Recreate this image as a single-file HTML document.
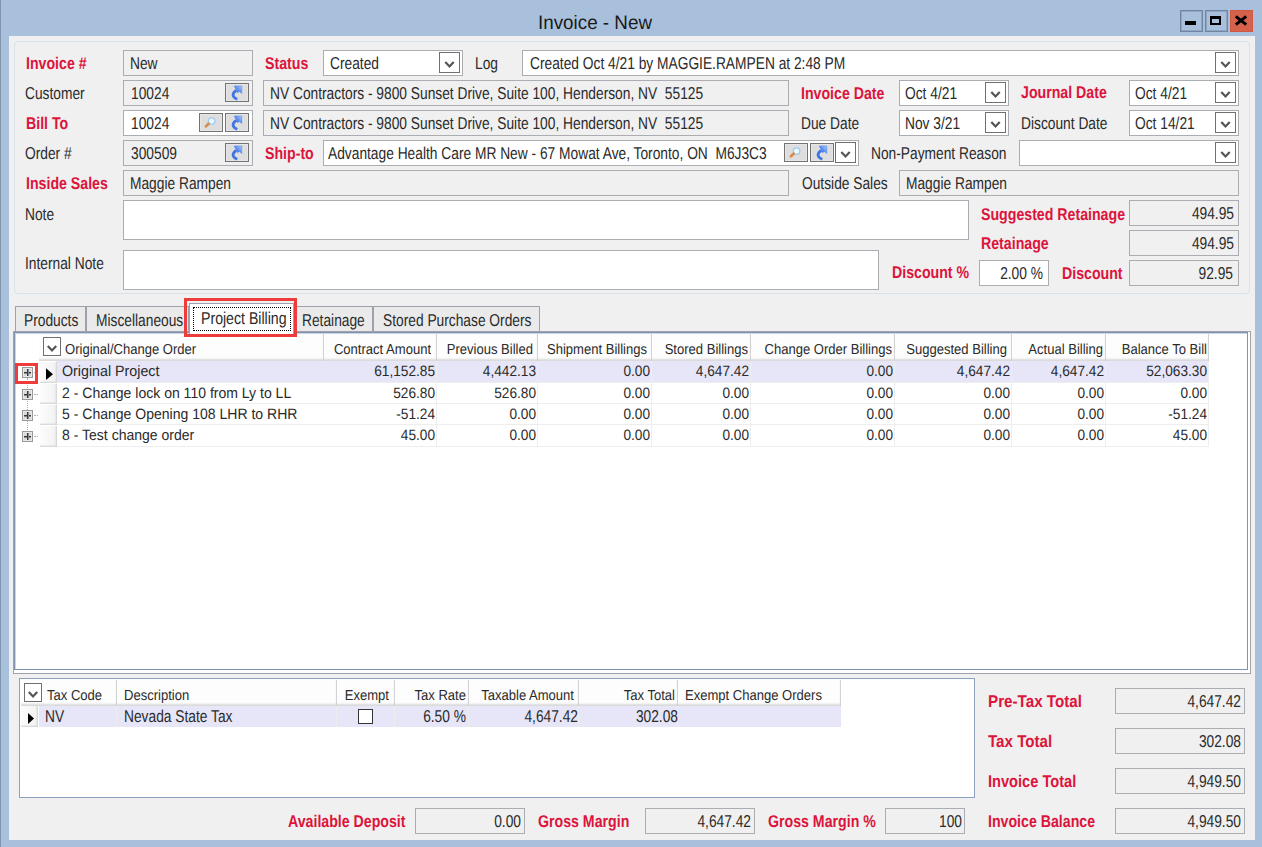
<!DOCTYPE html>
<html><head><meta charset="utf-8"><style>
html,body{margin:0;padding:0;}
body{width:1262px;height:847px;overflow:hidden;position:relative;background:#A8C0DC;font-family:"Liberation Sans", sans-serif;}
body div, body svg{position:absolute;}
body div{text-rendering:geometricPrecision;white-space:pre;}
.t{font-size:17.2px;color:#2a2a2a;}
.b{font-size:17px;font-weight:bold;color:#DC143C;}
.g{font-size:15px;color:#2a2a2a;}
.h{font-size:14.5px;color:#2a2a2a;}
.title{font-size:19.5px;color:#1a1a1a;}
</style></head><body>
<div style="left:0;top:0;width:1px;height:847px;background:#8196AE"></div>
<div class="title" style="left:538px;top:10.0px;height:26px;line-height:26px;transform:scaleX(0.965);transform-origin:0 0;">Invoice - New</div>
<div style="left:1180px;top:10px;width:23px;height:22px;border:1px solid #6F86A3;box-shadow:inset 0 0 0 1px #8FA5C0;box-sizing:border-box;"></div>
<div style="left:1205px;top:10px;width:23px;height:22px;border:1px solid #6F86A3;box-shadow:inset 0 0 0 1px #8FA5C0;box-sizing:border-box;"></div>
<div style="left:1230px;top:10px;width:23px;height:22px;background:#D6624B;box-shadow:inset 0 0 0 1px #CF5A44;"></div>
<div style="left:1185px;top:21px;width:11px;height:4px;background:#000"></div>
<div style="left:1210px;top:16px;width:11px;height:9px;border:2.5px solid #000;border-top-width:3px;box-sizing:border-box"></div>
<svg style="position:absolute;left:1230px;top:10px" width="23" height="22"><path d="M5.8 6.3 L16.2 14.7 M16.2 6.3 L5.8 14.7" stroke="#000" stroke-width="3"/></svg>
<div style="left:9px;top:36px;width:1246px;height:804px;background:#F0F0F0;"></div>
<div style="left:14px;top:41px;width:1236px;height:253px;border:1px solid #D8E2EA;border-radius:4px;box-sizing:border-box;"></div>
<div class="b" style="left:26px;top:50.5px;height:26px;line-height:26px;transform:scaleX(0.833);transform-origin:0 0;">Invoice #</div>
<div style="left:123px;top:50px;width:130px;height:26px;background:#F0F0F0;border:1px solid #ABADB3;box-sizing:border-box;"></div>
<div class="t" style="left:130px;top:49.5px;height:26px;line-height:26px;transform:scaleX(0.801);transform-origin:0 0;">New</div>
<div class="b" style="left:265px;top:50.5px;height:26px;line-height:26px;transform:scaleX(0.833);transform-origin:0 0;">Status</div>
<div style="left:323px;top:50px;width:140px;height:26px;background:#fff;border:1px solid #ABADB3;box-sizing:border-box;"></div>
<div style="left:439px;top:52px;width:21px;height:21px;background:#fff;border:1px solid #707070;box-sizing:border-box;"></div>
<svg style="position:absolute;left:439px;top:52px" width="21" height="21"><path d="M6.3 10.0 L10.5 14.5 L14.7 10.0" stroke="#555" stroke-width="2.2" fill="none"/></svg>
<div class="t" style="left:330px;top:49.5px;height:26px;line-height:26px;transform:scaleX(0.801);transform-origin:0 0;">Created</div>
<div class="t" style="left:475px;top:49.5px;height:26px;line-height:26px;transform:scaleX(0.801);transform-origin:0 0;">Log</div>
<div style="left:522px;top:50px;width:717px;height:26px;background:#fff;border:1px solid #ABADB3;box-sizing:border-box;"></div>
<div style="left:1215px;top:52px;width:21px;height:21px;background:#fff;border:1px solid #707070;box-sizing:border-box;"></div>
<svg style="position:absolute;left:1215px;top:52px" width="21" height="21"><path d="M6.3 10.0 L10.5 14.5 L14.7 10.0" stroke="#555" stroke-width="2.2" fill="none"/></svg>
<div class="t" style="left:530px;top:49.5px;height:26px;line-height:26px;transform:scaleX(0.801);transform-origin:0 0;">Created Oct 4/21 by MAGGIE.RAMPEN at 2:48 PM</div>
<div class="t" style="left:25px;top:79.5px;height:26px;line-height:26px;transform:scaleX(0.801);transform-origin:0 0;">Customer</div>
<div style="left:123px;top:80px;width:130px;height:26px;background:#F0F0F0;border:1px solid #ABADB3;box-sizing:border-box;"></div>
<div class="t" style="left:131px;top:79.5px;height:26px;line-height:26px;transform:scaleX(0.801);transform-origin:0 0;">10024</div>
<div style="left:225px;top:83px;width:24px;height:19px;background:#DEDEDE;border:1px solid #737373;box-shadow:inset 0 0 0 1px #E6E6E6;box-sizing:border-box;"></div>
<div style="left:225px;top:83px;width:24px;height:19px;"><svg width="24" height="19" style="position:absolute;left:0;top:0"><defs><linearGradient id="lg" x1="0" y1="1" x2="1" y2="0"><stop offset="0" stop-color="#2a62dc"/><stop offset="0.5" stop-color="#5a8ef0"/><stop offset="1" stop-color="#b4cffc"/></linearGradient></defs><path d="M12.3 16.2 C8.6 14.8 6.8 12.2 9.2 9.2 L11.2 7.2" stroke="#3f74e4" stroke-width="2.8" fill="none"/><path d="M9.2 3 L16.7 3 L16.7 10.4 L14.6 8.6 L12.4 9.6 L11 6.2 Z" fill="url(#lg)" stroke="#4f84ea" stroke-width="0.6"/></svg></div>
<div style="left:263px;top:80px;width:526px;height:26px;background:#F0F0F0;border:1px solid #ABADB3;box-sizing:border-box;"></div>
<div class="t" style="left:270px;top:79.5px;height:26px;line-height:26px;transform:scaleX(0.801);transform-origin:0 0;">NV Contractors - 9800 Sunset Drive, Suite 100, Henderson, NV&nbsp; 55125</div>
<div class="b" style="left:801px;top:80.5px;height:26px;line-height:26px;transform:scaleX(0.833);transform-origin:0 0;">Invoice Date</div>
<div style="left:899px;top:80px;width:110px;height:26px;background:#fff;border:1px solid #ABADB3;box-sizing:border-box;"></div>
<div style="left:985px;top:82px;width:21px;height:21px;background:#fff;border:1px solid #707070;box-sizing:border-box;"></div>
<svg style="position:absolute;left:985px;top:82px" width="21" height="21"><path d="M6.3 10.0 L10.5 14.5 L14.7 10.0" stroke="#555" stroke-width="2.2" fill="none"/></svg>
<div class="t" style="left:905px;top:79.5px;height:26px;line-height:26px;transform:scaleX(0.801);transform-origin:0 0;">Oct 4/21</div>
<div class="b" style="left:1021px;top:79.5px;height:26px;line-height:26px;transform:scaleX(0.833);transform-origin:0 0;">Journal Date</div>
<div style="left:1129px;top:80px;width:110px;height:26px;background:#fff;border:1px solid #ABADB3;box-sizing:border-box;"></div>
<div style="left:1215px;top:82px;width:21px;height:21px;background:#fff;border:1px solid #707070;box-sizing:border-box;"></div>
<svg style="position:absolute;left:1215px;top:82px" width="21" height="21"><path d="M6.3 10.0 L10.5 14.5 L14.7 10.0" stroke="#555" stroke-width="2.2" fill="none"/></svg>
<div class="t" style="left:1135px;top:79.5px;height:26px;line-height:26px;transform:scaleX(0.801);transform-origin:0 0;">Oct 4/21</div>
<div class="b" style="left:26px;top:110.5px;height:26px;line-height:26px;transform:scaleX(0.833);transform-origin:0 0;">Bill To</div>
<div style="left:123px;top:110px;width:130px;height:26px;background:#fff;border:1px solid #ABADB3;box-sizing:border-box;"></div>
<div class="t" style="left:131px;top:109.5px;height:26px;line-height:26px;transform:scaleX(0.801);transform-origin:0 0;">10024</div>
<div style="left:199px;top:113px;width:24px;height:19px;background:#DEDEDE;border:1px solid #737373;box-shadow:inset 0 0 0 1px #E6E6E6;box-sizing:border-box;"></div>
<div style="left:199px;top:113px;width:24px;height:19px;"><svg width="24" height="19" style="position:absolute;left:0;top:0"><circle cx="12.6" cy="8.1" r="3.3" fill="#e2fbff" stroke="#a6c6ee" stroke-width="1.3"/><path d="M7 13.2 L9.6 10.8" stroke="#d98b4a" stroke-width="2.8" stroke-linecap="round"/></svg></div>
<div style="left:225px;top:113px;width:24px;height:19px;background:#DEDEDE;border:1px solid #737373;box-shadow:inset 0 0 0 1px #E6E6E6;box-sizing:border-box;"></div>
<div style="left:225px;top:113px;width:24px;height:19px;"><svg width="24" height="19" style="position:absolute;left:0;top:0"><defs><linearGradient id="lg" x1="0" y1="1" x2="1" y2="0"><stop offset="0" stop-color="#2a62dc"/><stop offset="0.5" stop-color="#5a8ef0"/><stop offset="1" stop-color="#b4cffc"/></linearGradient></defs><path d="M12.3 16.2 C8.6 14.8 6.8 12.2 9.2 9.2 L11.2 7.2" stroke="#3f74e4" stroke-width="2.8" fill="none"/><path d="M9.2 3 L16.7 3 L16.7 10.4 L14.6 8.6 L12.4 9.6 L11 6.2 Z" fill="url(#lg)" stroke="#4f84ea" stroke-width="0.6"/></svg></div>
<div style="left:263px;top:110px;width:526px;height:26px;background:#F0F0F0;border:1px solid #ABADB3;box-sizing:border-box;"></div>
<div class="t" style="left:270px;top:109.5px;height:26px;line-height:26px;transform:scaleX(0.801);transform-origin:0 0;">NV Contractors - 9800 Sunset Drive, Suite 100, Henderson, NV&nbsp; 55125</div>
<div class="t" style="left:801px;top:109.5px;height:26px;line-height:26px;transform:scaleX(0.801);transform-origin:0 0;">Due Date</div>
<div style="left:899px;top:110px;width:110px;height:26px;background:#fff;border:1px solid #ABADB3;box-sizing:border-box;"></div>
<div style="left:985px;top:112px;width:21px;height:21px;background:#fff;border:1px solid #707070;box-sizing:border-box;"></div>
<svg style="position:absolute;left:985px;top:112px" width="21" height="21"><path d="M6.3 10.0 L10.5 14.5 L14.7 10.0" stroke="#555" stroke-width="2.2" fill="none"/></svg>
<div class="t" style="left:905px;top:109.5px;height:26px;line-height:26px;transform:scaleX(0.801);transform-origin:0 0;">Nov 3/21</div>
<div class="t" style="left:1021px;top:109.5px;height:26px;line-height:26px;transform:scaleX(0.801);transform-origin:0 0;">Discount Date</div>
<div style="left:1129px;top:110px;width:110px;height:26px;background:#fff;border:1px solid #ABADB3;box-sizing:border-box;"></div>
<div style="left:1215px;top:112px;width:21px;height:21px;background:#fff;border:1px solid #707070;box-sizing:border-box;"></div>
<svg style="position:absolute;left:1215px;top:112px" width="21" height="21"><path d="M6.3 10.0 L10.5 14.5 L14.7 10.0" stroke="#555" stroke-width="2.2" fill="none"/></svg>
<div class="t" style="left:1135px;top:109.5px;height:26px;line-height:26px;transform:scaleX(0.801);transform-origin:0 0;">Oct 14/21</div>
<div class="t" style="left:25px;top:139.5px;height:26px;line-height:26px;transform:scaleX(0.801);transform-origin:0 0;">Order #</div>
<div style="left:123px;top:140px;width:130px;height:26px;background:#F0F0F0;border:1px solid #ABADB3;box-sizing:border-box;"></div>
<div class="t" style="left:131px;top:139.5px;height:26px;line-height:26px;transform:scaleX(0.801);transform-origin:0 0;">300509</div>
<div style="left:225px;top:143px;width:24px;height:19px;background:#DEDEDE;border:1px solid #737373;box-shadow:inset 0 0 0 1px #E6E6E6;box-sizing:border-box;"></div>
<div style="left:225px;top:143px;width:24px;height:19px;"><svg width="24" height="19" style="position:absolute;left:0;top:0"><defs><linearGradient id="lg" x1="0" y1="1" x2="1" y2="0"><stop offset="0" stop-color="#2a62dc"/><stop offset="0.5" stop-color="#5a8ef0"/><stop offset="1" stop-color="#b4cffc"/></linearGradient></defs><path d="M12.3 16.2 C8.6 14.8 6.8 12.2 9.2 9.2 L11.2 7.2" stroke="#3f74e4" stroke-width="2.8" fill="none"/><path d="M9.2 3 L16.7 3 L16.7 10.4 L14.6 8.6 L12.4 9.6 L11 6.2 Z" fill="url(#lg)" stroke="#4f84ea" stroke-width="0.6"/></svg></div>
<div class="b" style="left:265px;top:140.5px;height:26px;line-height:26px;transform:scaleX(0.833);transform-origin:0 0;">Ship-to</div>
<div style="left:323px;top:140px;width:536px;height:26px;background:#fff;border:1px solid #ABADB3;box-sizing:border-box;"></div>
<div class="t" style="left:328px;top:139.5px;height:26px;line-height:26px;transform:scaleX(0.801);transform-origin:0 0;">Advantage Health Care MR New - 67 Mowat Ave, Toronto, ON&nbsp; M6J3C3</div>
<div style="left:784px;top:143px;width:24px;height:19px;background:#DEDEDE;border:1px solid #737373;box-shadow:inset 0 0 0 1px #E6E6E6;box-sizing:border-box;"></div>
<div style="left:784px;top:143px;width:24px;height:19px;"><svg width="24" height="19" style="position:absolute;left:0;top:0"><circle cx="12.6" cy="8.1" r="3.3" fill="#e2fbff" stroke="#a6c6ee" stroke-width="1.3"/><path d="M7 13.2 L9.6 10.8" stroke="#d98b4a" stroke-width="2.8" stroke-linecap="round"/></svg></div>
<div style="left:810px;top:143px;width:24px;height:19px;background:#DEDEDE;border:1px solid #737373;box-shadow:inset 0 0 0 1px #E6E6E6;box-sizing:border-box;"></div>
<div style="left:810px;top:143px;width:24px;height:19px;"><svg width="24" height="19" style="position:absolute;left:0;top:0"><defs><linearGradient id="lg" x1="0" y1="1" x2="1" y2="0"><stop offset="0" stop-color="#2a62dc"/><stop offset="0.5" stop-color="#5a8ef0"/><stop offset="1" stop-color="#b4cffc"/></linearGradient></defs><path d="M12.3 16.2 C8.6 14.8 6.8 12.2 9.2 9.2 L11.2 7.2" stroke="#3f74e4" stroke-width="2.8" fill="none"/><path d="M9.2 3 L16.7 3 L16.7 10.4 L14.6 8.6 L12.4 9.6 L11 6.2 Z" fill="url(#lg)" stroke="#4f84ea" stroke-width="0.6"/></svg></div>
<div style="left:835px;top:142px;width:21px;height:21px;background:#fff;border:1px solid #707070;box-sizing:border-box;"></div>
<svg style="position:absolute;left:835px;top:142px" width="21" height="21"><path d="M6.3 10.0 L10.5 14.5 L14.7 10.0" stroke="#555" stroke-width="2.2" fill="none"/></svg>
<div class="t" style="left:871px;top:139.5px;height:26px;line-height:26px;transform:scaleX(0.801);transform-origin:0 0;">Non-Payment Reason</div>
<div style="left:1019px;top:140px;width:220px;height:26px;background:#fff;border:1px solid #ABADB3;box-sizing:border-box;"></div>
<div style="left:1215px;top:142px;width:21px;height:21px;background:#fff;border:1px solid #707070;box-sizing:border-box;"></div>
<svg style="position:absolute;left:1215px;top:142px" width="21" height="21"><path d="M6.3 10.0 L10.5 14.5 L14.7 10.0" stroke="#555" stroke-width="2.2" fill="none"/></svg>
<div class="b" style="left:26px;top:170.5px;height:26px;line-height:26px;transform:scaleX(0.833);transform-origin:0 0;">Inside Sales</div>
<div style="left:123px;top:170px;width:666px;height:26px;background:#F0F0F0;border:1px solid #ABADB3;box-sizing:border-box;"></div>
<div class="t" style="left:130px;top:169.5px;height:26px;line-height:26px;transform:scaleX(0.801);transform-origin:0 0;">Maggie Rampen</div>
<div class="t" style="left:802px;top:169.5px;height:26px;line-height:26px;transform:scaleX(0.801);transform-origin:0 0;">Outside Sales</div>
<div style="left:899px;top:170px;width:340px;height:26px;background:#F0F0F0;border:1px solid #ABADB3;box-sizing:border-box;"></div>
<div class="t" style="left:906px;top:169.5px;height:26px;line-height:26px;transform:scaleX(0.801);transform-origin:0 0;">Maggie Rampen</div>
<div class="t" style="left:25px;top:200.5px;height:26px;line-height:26px;transform:scaleX(0.801);transform-origin:0 0;">Note</div>
<div style="left:123px;top:200px;width:846px;height:40px;background:#fff;border:1px solid #ABADB3;box-sizing:border-box;"></div>
<div class="t" style="left:25px;top:249.5px;height:26px;line-height:26px;transform:scaleX(0.801);transform-origin:0 0;">Internal Note</div>
<div style="left:123px;top:250px;width:756px;height:40px;background:#fff;border:1px solid #ABADB3;box-sizing:border-box;"></div>
<div class="b" style="left:981px;top:201.5px;height:26px;line-height:26px;transform:scaleX(0.833);transform-origin:0 0;">Suggested Retainage</div>
<div style="left:1129px;top:200px;width:110px;height:26px;background:#F0F0F0;border:1px solid #ABADB3;box-sizing:border-box;"></div>
<div class="t" style="left:834px;top:199.5px;width:400px;height:26px;line-height:26px;text-align:right;transform:scaleX(0.801);transform-origin:100% 0;">494.95</div>
<div class="b" style="left:981px;top:230.5px;height:26px;line-height:26px;transform:scaleX(0.833);transform-origin:0 0;">Retainage</div>
<div style="left:1129px;top:230px;width:110px;height:26px;background:#F0F0F0;border:1px solid #ABADB3;box-sizing:border-box;"></div>
<div class="t" style="left:834px;top:229.5px;width:400px;height:26px;line-height:26px;text-align:right;transform:scaleX(0.801);transform-origin:100% 0;">494.95</div>
<div class="b" style="left:892px;top:259.5px;height:26px;line-height:26px;transform:scaleX(0.833);transform-origin:0 0;">Discount %</div>
<div style="left:979px;top:260px;width:70px;height:26px;background:#fff;border:1px solid #ABADB3;box-sizing:border-box;"></div>
<div class="t" style="left:643px;top:259.5px;width:400px;height:26px;line-height:26px;text-align:right;transform:scaleX(0.801);transform-origin:100% 0;">2.00 %</div>
<div class="b" style="left:1062px;top:260.5px;height:26px;line-height:26px;transform:scaleX(0.833);transform-origin:0 0;">Discount</div>
<div style="left:1129px;top:260px;width:110px;height:26px;background:#F0F0F0;border:1px solid #ABADB3;box-sizing:border-box;"></div>
<div class="t" style="left:833px;top:259.5px;width:400px;height:26px;line-height:26px;text-align:right;transform:scaleX(0.801);transform-origin:100% 0;">92.95</div>
<div style="left:15px;top:306px;width:71px;height:27px;background:#EAEAEA;border:1px solid #9CA2AC;border-bottom:none;box-sizing:border-box;"></div>
<div class="t" style="left:24px;top:307.0px;height:26px;line-height:26px;transform:scaleX(0.801);transform-origin:0 0;">Products</div>
<div style="left:86px;top:306px;width:103px;height:27px;background:#EAEAEA;border:1px solid #9CA2AC;border-bottom:none;box-sizing:border-box;"></div>
<div class="t" style="left:96px;top:307.0px;height:26px;line-height:26px;transform:scaleX(0.801);transform-origin:0 0;">Miscellaneous</div>
<div style="left:294px;top:306px;width:79px;height:27px;background:#EAEAEA;border:1px solid #9CA2AC;border-bottom:none;box-sizing:border-box;"></div>
<div class="t" style="left:302px;top:307.0px;height:26px;line-height:26px;transform:scaleX(0.801);transform-origin:0 0;">Retainage</div>
<div style="left:373px;top:306px;width:167px;height:27px;background:#EAEAEA;border:1px solid #9CA2AC;border-bottom:none;box-sizing:border-box;"></div>
<div class="t" style="left:383px;top:307.0px;height:26px;line-height:26px;transform:scaleX(0.801);transform-origin:0 0;">Stored Purchase Orders</div>
<div style="left:13px;top:331px;width:1238px;height:343px;background:#fff;border:1px solid #A0A2AA;box-sizing:border-box;"></div>
<div style="left:14px;top:332px;width:1234px;height:338px;background:#fff;border:1px solid #8093B0;box-shadow:inset 1px 1px 0 #CCD5E5;box-sizing:border-box;"></div>
<div style="left:189px;top:303px;width:105px;height:31px;background:#fff;border:1px solid #9CA2AC;border-bottom:none;box-sizing:border-box;"></div>
<div style="left:193px;top:307px;width:98px;height:24px;border:1px dotted #000;box-sizing:border-box;"></div>
<div class="t" style="left:200.5px;top:304.5px;height:26px;line-height:26px;transform:scaleX(0.822);transform-origin:0 0;">Project Billing</div>
<div style="left:39px;top:334px;width:285px;height:27px;background:#FDFDFD;box-shadow:inset -2px 0 1px -1px #CFCFCF, inset 0 -3px 2px -1px #DADADA, inset 1px 0 0 0 #fff;box-sizing:border-box;"></div>
<div class="h" style="left:65px;top:336.5px;height:27px;line-height:27px;transform:scaleX(0.899);transform-origin:0 0;">Original/Change Order</div>
<div style="left:324px;top:334px;width:113px;height:27px;background:#FDFDFD;box-shadow:inset -2px 0 1px -1px #CFCFCF, inset 0 -3px 2px -1px #DADADA, inset 1px 0 0 0 #fff;box-sizing:border-box;"></div>
<div class="h" style="left:31px;top:336.5px;width:400px;height:27px;line-height:27px;text-align:right;transform:scaleX(0.899);transform-origin:100% 0;">Contract Amount</div>
<div style="left:437px;top:334px;width:101px;height:27px;background:#FDFDFD;box-shadow:inset -2px 0 1px -1px #CFCFCF, inset 0 -3px 2px -1px #DADADA, inset 1px 0 0 0 #fff;box-sizing:border-box;"></div>
<div class="h" style="left:133px;top:336.5px;width:400px;height:27px;line-height:27px;text-align:right;transform:scaleX(0.899);transform-origin:100% 0;">Previous Billed</div>
<div style="left:538px;top:334px;width:114px;height:27px;background:#FDFDFD;box-shadow:inset -2px 0 1px -1px #CFCFCF, inset 0 -3px 2px -1px #DADADA, inset 1px 0 0 0 #fff;box-sizing:border-box;"></div>
<div class="h" style="left:247px;top:336.5px;width:400px;height:27px;line-height:27px;text-align:right;transform:scaleX(0.899);transform-origin:100% 0;">Shipment Billings</div>
<div style="left:652px;top:334px;width:99px;height:27px;background:#FDFDFD;box-shadow:inset -2px 0 1px -1px #CFCFCF, inset 0 -3px 2px -1px #DADADA, inset 1px 0 0 0 #fff;box-sizing:border-box;"></div>
<div class="h" style="left:348px;top:336.5px;width:400px;height:27px;line-height:27px;text-align:right;transform:scaleX(0.899);transform-origin:100% 0;">Stored Billings</div>
<div style="left:751px;top:334px;width:144px;height:27px;background:#FDFDFD;box-shadow:inset -2px 0 1px -1px #CFCFCF, inset 0 -3px 2px -1px #DADADA, inset 1px 0 0 0 #fff;box-sizing:border-box;"></div>
<div class="h" style="left:492px;top:336.5px;width:400px;height:27px;line-height:27px;text-align:right;transform:scaleX(0.899);transform-origin:100% 0;">Change Order Billings</div>
<div style="left:895px;top:334px;width:117px;height:27px;background:#FDFDFD;box-shadow:inset -2px 0 1px -1px #CFCFCF, inset 0 -3px 2px -1px #DADADA, inset 1px 0 0 0 #fff;box-sizing:border-box;"></div>
<div class="h" style="left:607px;top:336.5px;width:400px;height:27px;line-height:27px;text-align:right;transform:scaleX(0.899);transform-origin:100% 0;">Suggested Billing</div>
<div style="left:1012px;top:334px;width:94px;height:27px;background:#FDFDFD;box-shadow:inset -2px 0 1px -1px #CFCFCF, inset 0 -3px 2px -1px #DADADA, inset 1px 0 0 0 #fff;box-sizing:border-box;"></div>
<div class="h" style="left:702.5px;top:336.5px;width:400px;height:27px;line-height:27px;text-align:right;transform:scaleX(0.899);transform-origin:100% 0;">Actual Billing</div>
<div style="left:1106px;top:334px;width:103px;height:27px;background:#FDFDFD;box-shadow:inset -2px 0 1px -1px #CFCFCF, inset 0 -3px 2px -1px #DADADA, inset 1px 0 0 0 #fff;box-sizing:border-box;"></div>
<div class="h" style="left:807px;top:336.5px;width:400px;height:27px;line-height:27px;text-align:right;transform:scaleX(0.899);transform-origin:100% 0;">Balance To Bill</div>
<div style="left:43px;top:337px;width:18px;height:19px;background:#fff;border:1px solid #707070;box-sizing:border-box;"></div>
<svg style="position:absolute;left:43px;top:337px" width="18" height="19"><path d="M4.8 9.0 L9.0 13.5 L13.2 9.0" stroke="#555" stroke-width="2.2" fill="none"/></svg>
<div style="left:27px;top:378px;width:1px;height:54px;border-left:1px dotted #B0B0B0;box-sizing:border-box"></div>
<div style="left:56px;top:361px;width:1153px;height:22px;background:#E6E6F8;border-bottom:1px solid #EEEEEE;box-sizing:border-box;"></div>
<div style="left:39px;top:362px;width:18px;height:21px;background:#fff;"></div>
<div style="left:40px;top:362px;width:17px;height:21px;background:linear-gradient(90deg,#FCFCFC,#F2F2F2);box-shadow:inset -2px -2px 2px -1px #CFCFCF;box-sizing:border-box;"></div>
<div style="left:436px;top:361px;width:1px;height:22px;background:#EEEEEE;"></div>
<div style="left:537px;top:361px;width:1px;height:22px;background:#EEEEEE;"></div>
<div style="left:651px;top:361px;width:1px;height:22px;background:#EEEEEE;"></div>
<div style="left:750px;top:361px;width:1px;height:22px;background:#EEEEEE;"></div>
<div style="left:894px;top:361px;width:1px;height:22px;background:#EEEEEE;"></div>
<div style="left:1011px;top:361px;width:1px;height:22px;background:#EEEEEE;"></div>
<div style="left:1105px;top:361px;width:1px;height:22px;background:#EEEEEE;"></div>
<div style="left:1208px;top:361px;width:1px;height:22px;background:#EEEEEE;"></div>
<div class="g" style="left:62px;top:360.5px;height:22px;line-height:22px;transform:scaleX(0.95);transform-origin:0 0;">Original Project</div>
<div class="g" style="left:35px;top:360.5px;width:400px;height:22px;line-height:22px;text-align:right;transform:scaleX(0.91);transform-origin:100% 0;">61,152.85</div>
<div class="g" style="left:136px;top:360.5px;width:400px;height:22px;line-height:22px;text-align:right;transform:scaleX(0.91);transform-origin:100% 0;">4,442.13</div>
<div class="g" style="left:250px;top:360.5px;width:400px;height:22px;line-height:22px;text-align:right;transform:scaleX(0.91);transform-origin:100% 0;">0.00</div>
<div class="g" style="left:349px;top:360.5px;width:400px;height:22px;line-height:22px;text-align:right;transform:scaleX(0.91);transform-origin:100% 0;">4,647.42</div>
<div class="g" style="left:493px;top:360.5px;width:400px;height:22px;line-height:22px;text-align:right;transform:scaleX(0.91);transform-origin:100% 0;">0.00</div>
<div class="g" style="left:610px;top:360.5px;width:400px;height:22px;line-height:22px;text-align:right;transform:scaleX(0.91);transform-origin:100% 0;">4,647.42</div>
<div class="g" style="left:704px;top:360.5px;width:400px;height:22px;line-height:22px;text-align:right;transform:scaleX(0.91);transform-origin:100% 0;">4,647.42</div>
<div class="g" style="left:807px;top:360.5px;width:400px;height:22px;line-height:22px;text-align:right;transform:scaleX(0.91);transform-origin:100% 0;">52,063.30</div>
<div style="left:22px;top:367px;width:11px;height:11px;background:#D9D9D9;border:1px solid #999;box-shadow:inset 0 0 0 1px #E9E9E9;box-sizing:border-box;"></div>
<div style="left:24px;top:372px;width:7px;height:1px;background:#3a3a3a;box-shadow:0 1px 0 #8a8a8a"></div>
<div style="left:27px;top:369px;width:1px;height:7px;background:#3a3a3a;box-shadow:1px 0 0 #8a8a8a"></div>
<div style="left:34px;top:372px;width:4px;height:1px;border-top:1px dotted #B0B0B0;box-sizing:border-box"></div>
<div style="left:56px;top:383px;width:1153px;height:21px;background:#fff;border-bottom:1px solid #EEEEEE;box-sizing:border-box;"></div>
<div style="left:39px;top:384px;width:18px;height:20px;background:#fff;"></div>
<div style="left:40px;top:384px;width:17px;height:20px;background:linear-gradient(90deg,#FCFCFC,#F2F2F2);box-shadow:inset -2px -2px 2px -1px #CFCFCF;box-sizing:border-box;"></div>
<div style="left:436px;top:383px;width:1px;height:21px;background:#EEEEEE;"></div>
<div style="left:537px;top:383px;width:1px;height:21px;background:#EEEEEE;"></div>
<div style="left:651px;top:383px;width:1px;height:21px;background:#EEEEEE;"></div>
<div style="left:750px;top:383px;width:1px;height:21px;background:#EEEEEE;"></div>
<div style="left:894px;top:383px;width:1px;height:21px;background:#EEEEEE;"></div>
<div style="left:1011px;top:383px;width:1px;height:21px;background:#EEEEEE;"></div>
<div style="left:1105px;top:383px;width:1px;height:21px;background:#EEEEEE;"></div>
<div style="left:1208px;top:383px;width:1px;height:21px;background:#EEEEEE;"></div>
<div class="g" style="left:62px;top:382.5px;height:21px;line-height:21px;transform:scaleX(0.935);transform-origin:0 0;">2 - Change lock on 110 from Ly to LL</div>
<div class="g" style="left:35px;top:382.5px;width:400px;height:21px;line-height:21px;text-align:right;transform:scaleX(0.91);transform-origin:100% 0;">526.80</div>
<div class="g" style="left:136px;top:382.5px;width:400px;height:21px;line-height:21px;text-align:right;transform:scaleX(0.91);transform-origin:100% 0;">526.80</div>
<div class="g" style="left:250px;top:382.5px;width:400px;height:21px;line-height:21px;text-align:right;transform:scaleX(0.91);transform-origin:100% 0;">0.00</div>
<div class="g" style="left:349px;top:382.5px;width:400px;height:21px;line-height:21px;text-align:right;transform:scaleX(0.91);transform-origin:100% 0;">0.00</div>
<div class="g" style="left:493px;top:382.5px;width:400px;height:21px;line-height:21px;text-align:right;transform:scaleX(0.91);transform-origin:100% 0;">0.00</div>
<div class="g" style="left:610px;top:382.5px;width:400px;height:21px;line-height:21px;text-align:right;transform:scaleX(0.91);transform-origin:100% 0;">0.00</div>
<div class="g" style="left:704px;top:382.5px;width:400px;height:21px;line-height:21px;text-align:right;transform:scaleX(0.91);transform-origin:100% 0;">0.00</div>
<div class="g" style="left:807px;top:382.5px;width:400px;height:21px;line-height:21px;text-align:right;transform:scaleX(0.91);transform-origin:100% 0;">0.00</div>
<div style="left:22px;top:389px;width:11px;height:11px;background:#D9D9D9;border:1px solid #999;box-shadow:inset 0 0 0 1px #E9E9E9;box-sizing:border-box;"></div>
<div style="left:24px;top:394px;width:7px;height:1px;background:#3a3a3a;box-shadow:0 1px 0 #8a8a8a"></div>
<div style="left:27px;top:391px;width:1px;height:7px;background:#3a3a3a;box-shadow:1px 0 0 #8a8a8a"></div>
<div style="left:34px;top:394px;width:4px;height:1px;border-top:1px dotted #B0B0B0;box-sizing:border-box"></div>
<div style="left:56px;top:404px;width:1153px;height:21px;background:#fff;border-bottom:1px solid #EEEEEE;box-sizing:border-box;"></div>
<div style="left:39px;top:405px;width:18px;height:20px;background:#fff;"></div>
<div style="left:40px;top:405px;width:17px;height:20px;background:linear-gradient(90deg,#FCFCFC,#F2F2F2);box-shadow:inset -2px -2px 2px -1px #CFCFCF;box-sizing:border-box;"></div>
<div style="left:436px;top:404px;width:1px;height:21px;background:#EEEEEE;"></div>
<div style="left:537px;top:404px;width:1px;height:21px;background:#EEEEEE;"></div>
<div style="left:651px;top:404px;width:1px;height:21px;background:#EEEEEE;"></div>
<div style="left:750px;top:404px;width:1px;height:21px;background:#EEEEEE;"></div>
<div style="left:894px;top:404px;width:1px;height:21px;background:#EEEEEE;"></div>
<div style="left:1011px;top:404px;width:1px;height:21px;background:#EEEEEE;"></div>
<div style="left:1105px;top:404px;width:1px;height:21px;background:#EEEEEE;"></div>
<div style="left:1208px;top:404px;width:1px;height:21px;background:#EEEEEE;"></div>
<div class="g" style="left:62px;top:403.5px;height:21px;line-height:21px;transform:scaleX(0.935);transform-origin:0 0;">5 - Change Opening 108 LHR to RHR</div>
<div class="g" style="left:35px;top:403.5px;width:400px;height:21px;line-height:21px;text-align:right;transform:scaleX(0.91);transform-origin:100% 0;">-51.24</div>
<div class="g" style="left:136px;top:403.5px;width:400px;height:21px;line-height:21px;text-align:right;transform:scaleX(0.91);transform-origin:100% 0;">0.00</div>
<div class="g" style="left:250px;top:403.5px;width:400px;height:21px;line-height:21px;text-align:right;transform:scaleX(0.91);transform-origin:100% 0;">0.00</div>
<div class="g" style="left:349px;top:403.5px;width:400px;height:21px;line-height:21px;text-align:right;transform:scaleX(0.91);transform-origin:100% 0;">0.00</div>
<div class="g" style="left:493px;top:403.5px;width:400px;height:21px;line-height:21px;text-align:right;transform:scaleX(0.91);transform-origin:100% 0;">0.00</div>
<div class="g" style="left:610px;top:403.5px;width:400px;height:21px;line-height:21px;text-align:right;transform:scaleX(0.91);transform-origin:100% 0;">0.00</div>
<div class="g" style="left:704px;top:403.5px;width:400px;height:21px;line-height:21px;text-align:right;transform:scaleX(0.91);transform-origin:100% 0;">0.00</div>
<div class="g" style="left:807px;top:403.5px;width:400px;height:21px;line-height:21px;text-align:right;transform:scaleX(0.91);transform-origin:100% 0;">-51.24</div>
<div style="left:22px;top:410px;width:11px;height:11px;background:#D9D9D9;border:1px solid #999;box-shadow:inset 0 0 0 1px #E9E9E9;box-sizing:border-box;"></div>
<div style="left:24px;top:415px;width:7px;height:1px;background:#3a3a3a;box-shadow:0 1px 0 #8a8a8a"></div>
<div style="left:27px;top:412px;width:1px;height:7px;background:#3a3a3a;box-shadow:1px 0 0 #8a8a8a"></div>
<div style="left:34px;top:415px;width:4px;height:1px;border-top:1px dotted #B0B0B0;box-sizing:border-box"></div>
<div style="left:56px;top:425px;width:1153px;height:22px;background:#fff;border-bottom:1px solid #EEEEEE;box-sizing:border-box;"></div>
<div style="left:39px;top:426px;width:18px;height:21px;background:#fff;"></div>
<div style="left:40px;top:426px;width:17px;height:21px;background:linear-gradient(90deg,#FCFCFC,#F2F2F2);box-shadow:inset -2px -2px 2px -1px #CFCFCF;box-sizing:border-box;"></div>
<div style="left:436px;top:425px;width:1px;height:22px;background:#EEEEEE;"></div>
<div style="left:537px;top:425px;width:1px;height:22px;background:#EEEEEE;"></div>
<div style="left:651px;top:425px;width:1px;height:22px;background:#EEEEEE;"></div>
<div style="left:750px;top:425px;width:1px;height:22px;background:#EEEEEE;"></div>
<div style="left:894px;top:425px;width:1px;height:22px;background:#EEEEEE;"></div>
<div style="left:1011px;top:425px;width:1px;height:22px;background:#EEEEEE;"></div>
<div style="left:1105px;top:425px;width:1px;height:22px;background:#EEEEEE;"></div>
<div style="left:1208px;top:425px;width:1px;height:22px;background:#EEEEEE;"></div>
<div class="g" style="left:62px;top:424.5px;height:22px;line-height:22px;transform:scaleX(0.935);transform-origin:0 0;">8 - Test change order</div>
<div class="g" style="left:35px;top:424.5px;width:400px;height:22px;line-height:22px;text-align:right;transform:scaleX(0.91);transform-origin:100% 0;">45.00</div>
<div class="g" style="left:136px;top:424.5px;width:400px;height:22px;line-height:22px;text-align:right;transform:scaleX(0.91);transform-origin:100% 0;">0.00</div>
<div class="g" style="left:250px;top:424.5px;width:400px;height:22px;line-height:22px;text-align:right;transform:scaleX(0.91);transform-origin:100% 0;">0.00</div>
<div class="g" style="left:349px;top:424.5px;width:400px;height:22px;line-height:22px;text-align:right;transform:scaleX(0.91);transform-origin:100% 0;">0.00</div>
<div class="g" style="left:493px;top:424.5px;width:400px;height:22px;line-height:22px;text-align:right;transform:scaleX(0.91);transform-origin:100% 0;">0.00</div>
<div class="g" style="left:610px;top:424.5px;width:400px;height:22px;line-height:22px;text-align:right;transform:scaleX(0.91);transform-origin:100% 0;">0.00</div>
<div class="g" style="left:704px;top:424.5px;width:400px;height:22px;line-height:22px;text-align:right;transform:scaleX(0.91);transform-origin:100% 0;">0.00</div>
<div class="g" style="left:807px;top:424.5px;width:400px;height:22px;line-height:22px;text-align:right;transform:scaleX(0.91);transform-origin:100% 0;">45.00</div>
<div style="left:22px;top:431px;width:11px;height:11px;background:#D9D9D9;border:1px solid #999;box-shadow:inset 0 0 0 1px #E9E9E9;box-sizing:border-box;"></div>
<div style="left:24px;top:436px;width:7px;height:1px;background:#3a3a3a;box-shadow:0 1px 0 #8a8a8a"></div>
<div style="left:27px;top:433px;width:1px;height:7px;background:#3a3a3a;box-shadow:1px 0 0 #8a8a8a"></div>
<div style="left:34px;top:436px;width:4px;height:1px;border-top:1px dotted #B0B0B0;box-sizing:border-box"></div>
<svg style="position:absolute;left:46px;top:368px" width="8" height="13"><path d="M0 0.3 L7 6.2 L0 12 Z" fill="#000"/></svg>
<div style="left:19px;top:678px;width:956px;height:120px;background:#fff;border:1px solid #8DA2C2;box-sizing:border-box;"></div>
<div style="left:21px;top:680px;width:96px;height:26px;background:#FDFDFD;box-shadow:inset -2px 0 1px -1px #CFCFCF, inset 0 -3px 2px -1px #DADADA, inset 1px 0 0 0 #fff;box-sizing:border-box;"></div>
<div class="h" style="left:47px;top:683.0px;height:26px;line-height:26px;transform:scaleX(0.899);transform-origin:0 0;">Tax Code</div>
<div style="left:117px;top:680px;width:220px;height:26px;background:#FDFDFD;box-shadow:inset -2px 0 1px -1px #CFCFCF, inset 0 -3px 2px -1px #DADADA, inset 1px 0 0 0 #fff;box-sizing:border-box;"></div>
<div class="h" style="left:124px;top:683.0px;height:26px;line-height:26px;transform:scaleX(0.899);transform-origin:0 0;">Description</div>
<div style="left:337px;top:680px;width:58px;height:26px;background:#FDFDFD;box-shadow:inset -2px 0 1px -1px #CFCFCF, inset 0 -3px 2px -1px #DADADA, inset 1px 0 0 0 #fff;box-sizing:border-box;"></div>
<div class="h" style="left:-11px;top:683.0px;width:400px;height:26px;line-height:26px;text-align:right;transform:scaleX(0.899);transform-origin:100% 0;">Exempt</div>
<div style="left:395px;top:680px;width:74px;height:26px;background:#FDFDFD;box-shadow:inset -2px 0 1px -1px #CFCFCF, inset 0 -3px 2px -1px #DADADA, inset 1px 0 0 0 #fff;box-sizing:border-box;"></div>
<div class="h" style="left:65.5px;top:683.0px;width:400px;height:26px;line-height:26px;text-align:right;transform:scaleX(0.899);transform-origin:100% 0;">Tax Rate</div>
<div style="left:469px;top:680px;width:110px;height:26px;background:#FDFDFD;box-shadow:inset -2px 0 1px -1px #CFCFCF, inset 0 -3px 2px -1px #DADADA, inset 1px 0 0 0 #fff;box-sizing:border-box;"></div>
<div class="h" style="left:174px;top:683.0px;width:400px;height:26px;line-height:26px;text-align:right;transform:scaleX(0.899);transform-origin:100% 0;">Taxable Amount</div>
<div style="left:579px;top:680px;width:99px;height:26px;background:#FDFDFD;box-shadow:inset -2px 0 1px -1px #CFCFCF, inset 0 -3px 2px -1px #DADADA, inset 1px 0 0 0 #fff;box-sizing:border-box;"></div>
<div class="h" style="left:274.5px;top:683.0px;width:400px;height:26px;line-height:26px;text-align:right;transform:scaleX(0.899);transform-origin:100% 0;">Tax Total</div>
<div style="left:678px;top:680px;width:163px;height:26px;background:#FDFDFD;box-shadow:inset -2px 0 1px -1px #CFCFCF, inset 0 -3px 2px -1px #DADADA, inset 1px 0 0 0 #fff;box-sizing:border-box;"></div>
<div class="h" style="left:685px;top:683.0px;height:26px;line-height:26px;transform:scaleX(0.899);transform-origin:0 0;">Exempt Change Orders</div>
<div style="left:24px;top:683px;width:18px;height:19px;background:#fff;border:1px solid #707070;box-sizing:border-box;"></div>
<svg style="position:absolute;left:24px;top:683px" width="18" height="19"><path d="M4.8 9.0 L9.0 13.5 L13.2 9.0" stroke="#555" stroke-width="2.2" fill="none"/></svg>
<div style="left:38px;top:706px;width:803px;height:21px;background:#E6E6F8;"></div>
<div style="left:21px;top:706px;width:18px;height:21px;background:#fff;"></div>
<div style="left:21px;top:706px;width:17px;height:21px;background:linear-gradient(90deg,#FCFCFC,#F2F2F2);box-shadow:inset -2px -2px 2px -1px #CFCFCF;box-sizing:border-box;"></div>
<div style="left:116px;top:706px;width:1px;height:21px;background:#EDEDED;"></div>
<div style="left:336px;top:706px;width:1px;height:21px;background:#EDEDED;"></div>
<div style="left:394px;top:706px;width:1px;height:21px;background:#EDEDED;"></div>
<div style="left:468px;top:706px;width:1px;height:21px;background:#EDEDED;"></div>
<div style="left:578px;top:706px;width:1px;height:21px;background:#EDEDED;"></div>
<div style="left:677px;top:706px;width:1px;height:21px;background:#EDEDED;"></div>
<svg style="position:absolute;left:28px;top:713px" width="7" height="12"><path d="M0 0 L6 5.5 L0 11 Z" fill="#000"/></svg>
<div class="t" style="left:45px;top:705.5px;height:21px;line-height:21px;transform:scaleX(0.801);transform-origin:0 0;">NV</div>
<div class="t" style="left:124px;top:705.5px;height:21px;line-height:21px;transform:scaleX(0.801);transform-origin:0 0;">Nevada State Tax</div>
<div style="left:358px;top:709px;width:15px;height:15px;background:#fff;border:1px solid #333;box-sizing:border-box;"></div>
<div class="t" style="left:66px;top:705.5px;width:400px;height:21px;line-height:21px;text-align:right;transform:scaleX(0.801);transform-origin:100% 0;">6.50 %</div>
<div class="t" style="left:177.5px;top:705.5px;width:400px;height:21px;line-height:21px;text-align:right;transform:scaleX(0.801);transform-origin:100% 0;">4,647.42</div>
<div class="t" style="left:278px;top:705.5px;width:400px;height:21px;line-height:21px;text-align:right;transform:scaleX(0.801);transform-origin:100% 0;">302.08</div>
<div class="b" style="left:988px;top:688.5px;height:26px;line-height:26px;transform:scaleX(0.894);transform-origin:0 0;">Pre-Tax Total</div>
<div style="left:1115px;top:688px;width:130px;height:26px;background:#F0F0F0;border:1px solid #ABADB3;box-sizing:border-box;"></div>
<div class="t" style="left:840.5px;top:687.5px;width:400px;height:26px;line-height:26px;text-align:right;transform:scaleX(0.801);transform-origin:100% 0;">4,647.42</div>
<div class="b" style="left:988px;top:728.5px;height:26px;line-height:26px;transform:scaleX(0.89);transform-origin:0 0;">Tax Total</div>
<div style="left:1115px;top:728px;width:130px;height:26px;background:#F0F0F0;border:1px solid #ABADB3;box-sizing:border-box;"></div>
<div class="t" style="left:840.5px;top:727.5px;width:400px;height:26px;line-height:26px;text-align:right;transform:scaleX(0.801);transform-origin:100% 0;">302.08</div>
<div class="b" style="left:988px;top:768.5px;height:26px;line-height:26px;transform:scaleX(0.86);transform-origin:0 0;">Invoice Total</div>
<div style="left:1115px;top:768px;width:130px;height:26px;background:#F0F0F0;border:1px solid #ABADB3;box-sizing:border-box;"></div>
<div class="t" style="left:840.5px;top:767.5px;width:400px;height:26px;line-height:26px;text-align:right;transform:scaleX(0.801);transform-origin:100% 0;">4,949.50</div>
<div class="b" style="left:988px;top:808.5px;height:26px;line-height:26px;transform:scaleX(0.833);transform-origin:0 0;">Invoice Balance</div>
<div style="left:1115px;top:808px;width:130px;height:26px;background:#F0F0F0;border:1px solid #ABADB3;box-sizing:border-box;"></div>
<div class="t" style="left:840.5px;top:807.5px;width:400px;height:26px;line-height:26px;text-align:right;transform:scaleX(0.801);transform-origin:100% 0;">4,949.50</div>
<div class="b" style="left:288px;top:808.5px;height:26px;line-height:26px;transform:scaleX(0.833);transform-origin:0 0;">Available Deposit</div>
<div style="left:415px;top:808px;width:110px;height:26px;background:#F0F0F0;border:1px solid #ABADB3;box-sizing:border-box;"></div>
<div class="t" style="left:120.5px;top:807.5px;width:400px;height:26px;line-height:26px;text-align:right;transform:scaleX(0.801);transform-origin:100% 0;">0.00</div>
<div class="b" style="left:538px;top:808.5px;height:26px;line-height:26px;transform:scaleX(0.833);transform-origin:0 0;">Gross Margin</div>
<div style="left:645px;top:808px;width:110px;height:26px;background:#F0F0F0;border:1px solid #ABADB3;box-sizing:border-box;"></div>
<div class="t" style="left:350.5px;top:807.5px;width:400px;height:26px;line-height:26px;text-align:right;transform:scaleX(0.801);transform-origin:100% 0;">4,647.42</div>
<div class="b" style="left:768px;top:808.5px;height:26px;line-height:26px;transform:scaleX(0.833);transform-origin:0 0;">Gross Margin %</div>
<div style="left:885px;top:808px;width:80px;height:26px;background:#F0F0F0;border:1px solid #ABADB3;box-sizing:border-box;"></div>
<div class="t" style="left:562px;top:807.5px;width:400px;height:26px;line-height:26px;text-align:right;transform:scaleX(0.801);transform-origin:100% 0;">100</div>
<div style="left:184px;top:298px;width:113px;height:39px;border:3px solid #EE3B3B;box-sizing:border-box;"></div>
<div style="left:15px;top:363px;width:23px;height:21px;border:3px solid #EE3B3B;box-sizing:border-box;"></div>
</body></html>
